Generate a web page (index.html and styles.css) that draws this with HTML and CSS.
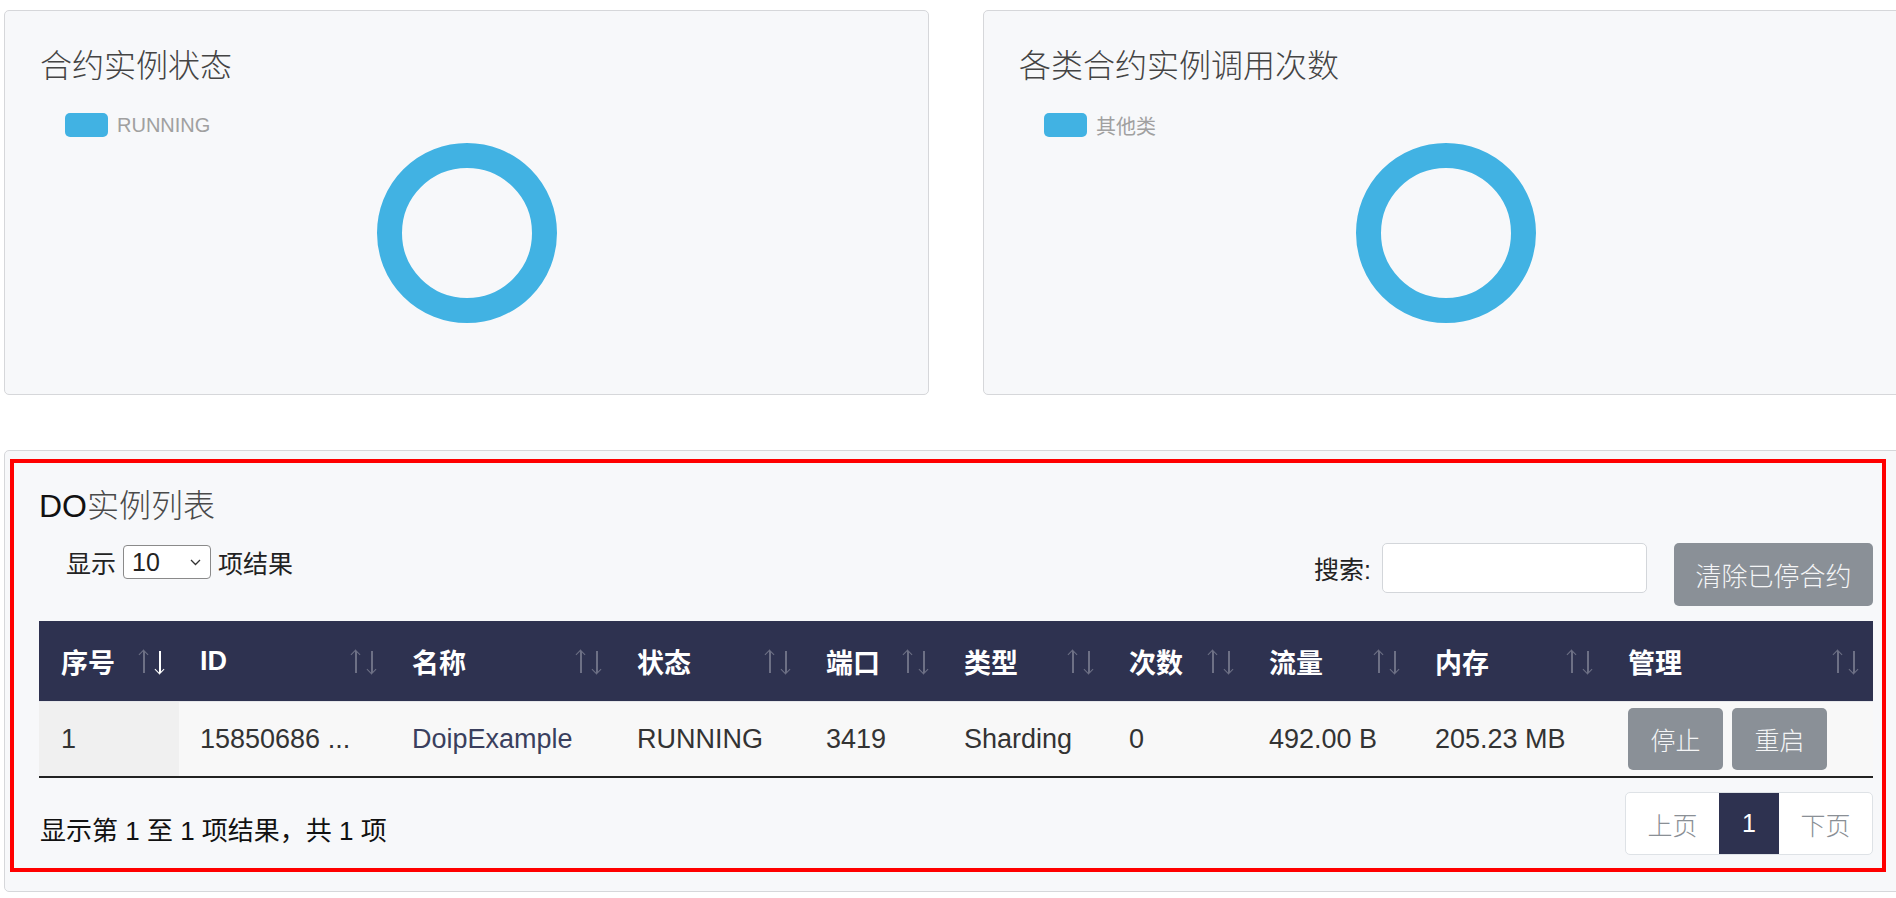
FILE: index.html
```html
<!DOCTYPE html>
<html lang="zh-CN">
<head>
<meta charset="utf-8">
<title>合约实例</title>
<link rel="stylesheet" href="styles.css">
</head>
<body>
<div class="page">
  <div class="chart-row">
    <section class="card chart-card">
      <h2 class="card-title">合约实例状态</h2>
      <div class="legend"><span class="legend-box"></span><span class="legend-label">RUNNING</span></div>
      <div class="donut-wrap">
        <svg class="donut" width="180" height="180" viewBox="0 0 180 180"><circle cx="90" cy="90" r="77.5" fill="none" stroke="#41b2e3" stroke-width="25"/></svg>
      </div>
    </section>
    <section class="card chart-card">
      <h2 class="card-title">各类合约实例调用次数</h2>
      <div class="legend"><span class="legend-box"></span><span class="legend-label">其他类</span></div>
      <div class="donut-wrap">
        <svg class="donut" width="180" height="180" viewBox="0 0 180 180"><circle cx="90" cy="90" r="77.5" fill="none" stroke="#41b2e3" stroke-width="25"/></svg>
      </div>
    </section>
  </div>

  <section class="card list-card">
    <div class="highlight">
      <h2 class="list-title"><span class="latin">DO</span><span class="cjk">实例列表</span></h2>
      <div class="controls">
        <label class="length">显示
          <span class="select-wrap">
            <select class="length-select"><option>10</option><option>25</option><option>50</option><option>100</option></select>
            <svg class="chevron" width="11" height="7" viewBox="0 0 11 7"><path d="M1 1 L5.5 5.5 L10 1" fill="none" stroke="#333" stroke-width="1.3"/></svg>
          </span>
          项结果</label>
        <div class="right-controls">
          <label class="search">搜索: <input class="search-input" type="text"></label>
          <button class="btn btn-clear">清除已停合约</button>
        </div>
      </div>
      <table class="data-table">
        <colgroup>
          <col style="width:140px"><col style="width:212px"><col style="width:225px"><col style="width:189px"><col style="width:138px">
          <col style="width:165px"><col style="width:140px"><col style="width:166px"><col style="width:193px"><col style="width:266px">
        </colgroup>
        <thead>
          <tr>
            <th class="sorted">序号<span class="sort up"></span><span class="sort down"></span></th>
            <th>ID<span class="sort up"></span><span class="sort down"></span></th>
            <th>名称<span class="sort up"></span><span class="sort down"></span></th>
            <th>状态<span class="sort up"></span><span class="sort down"></span></th>
            <th>端口<span class="sort up"></span><span class="sort down"></span></th>
            <th>类型<span class="sort up"></span><span class="sort down"></span></th>
            <th>次数<span class="sort up"></span><span class="sort down"></span></th>
            <th>流量<span class="sort up"></span><span class="sort down"></span></th>
            <th>内存<span class="sort up"></span><span class="sort down"></span></th>
            <th>管理<span class="sort up"></span><span class="sort down"></span></th>
          </tr>
        </thead>
        <tbody>
          <tr>
            <td class="sorted-col">1</td>
            <td>15850686 ...</td>
            <td class="name">DoipExample</td>
            <td>RUNNING</td>
            <td>3419</td>
            <td>Sharding</td>
            <td>0</td>
            <td>492.00 B</td>
            <td>205.23 MB</td>
            <td class="actions"><button class="btn btn-row">停止</button><button class="btn btn-row">重启</button></td>
          </tr>
        </tbody>
      </table>
      <div class="table-footer">
        <div class="info">显示第 1 至 1 项结果，共 1 项</div>
        <div class="pager">
          <span class="page-item disabled">上页</span>
          <span class="page-item active">1</span>
          <span class="page-item disabled">下页</span>
        </div>
      </div>
    </div>
  </section>
</div>
</body>
</html>
```

FILE: styles.css
```css
html, body {
  margin: 0;
  padding: 0;
  background: #ffffff;
  overflow: hidden;
}

body {
  font-family: "Liberation Sans", "Noto Sans CJK SC", sans-serif;
  color: #333333;
}

.page {
  padding: 10px 0 0 4px;
  width: 1910px;
}

.chart-row {
  display: flex;
  gap: 54px;
}

.card {
  background: #f7f8fa;
  border: 1px solid #d6d7da;
  border-radius: 5px;
  box-sizing: border-box;
  flex-shrink: 0;
}

.chart-card {
  width: 925px;
  height: 385px;
}

.card-title {
  margin: 0;
  padding: 32px 0 0 35px;
  font-family: "Noto Sans CJK SC", sans-serif;
  font-weight: 300;
  font-size: 32px;
  line-height: 40px;
  color: #444444;
}

.legend {
  display: flex;
  align-items: center;
  margin: 30px 0 0 60px;
  height: 24px;
}

.legend-box {
  width: 43px;
  height: 24px;
  border-radius: 5px;
  background: #41b2e3;
}

.legend-label {
  margin-left: 9px;
  font-size: 20px;
  color: #a0a0a0;
}

.donut-wrap {
  display: flex;
  justify-content: center;
  margin-top: 6px;
}

.donut {
  display: block;
}

.list-card {
  margin-top: 55px;
  width: 1904px;
  padding: 8px 0 19px 5px;
}

.highlight {
  width: 1876px;
  box-sizing: border-box;
  border: 4px solid #ff0000;
  padding: 20px 9px 13px 25px;
}

.list-title {
  margin: 0;
  font-weight: 400;
  font-size: 32px;
  line-height: 40px;
}

.list-title .latin {
  color: #111111;
}

.list-title .cjk {
  font-family: "Noto Sans CJK SC", sans-serif;
  font-weight: 300;
  color: #4a4a4a;
}

.controls {
  display: flex;
  justify-content: space-between;
  align-items: flex-start;
  margin-top: 17px;
  height: 63px;
}

.length {
  display: flex;
  align-items: center;
  gap: 7px;
  height: 34px;
  margin: 2px 0 0 27px;
  font-size: 25px;
  color: #222222;
}

.select-wrap {
  position: relative;
  display: block;
  width: 88px;
  height: 34px;
}

.length-select {
  appearance: none;
  -webkit-appearance: none;
  display: block;
  width: 88px;
  height: 34px;
  box-sizing: border-box;
  font-family: "Liberation Sans", sans-serif;
  font-size: 25px;
  line-height: 32px;
  color: #222222;
  background: #ffffff;
  border: 1px solid #8a8a8a;
  border-radius: 4px;
  padding: 0 0 0 8px;
}

.chevron {
  position: absolute;
  right: 10px;
  top: 14px;
  pointer-events: none;
}

.right-controls {
  display: flex;
  align-items: flex-start;
}

.search {
  display: flex;
  align-items: center;
  gap: 11px;
  height: 50px;
  font-size: 25px;
  color: #222222;
}

.search-input {
  width: 265px;
  height: 50px;
  box-sizing: border-box;
  border: 1px solid #d3d6da;
  border-radius: 5px;
  background: #ffffff;
}

.btn {
  border: none;
  border-radius: 5px;
  background: #8a9097;
  color: #f4f5f6;
  font-family: "Noto Sans CJK SC", sans-serif;
  font-weight: 300;
  padding: 0;
}

.btn-clear {
  margin-left: 27px;
  width: 199px;
  height: 63px;
  font-size: 26px;
}

.data-table {
  margin-top: 15px;
  width: 1834px;
  table-layout: fixed;
  border-collapse: collapse;
  font-size: 27px;
}

.data-table th {
  position: relative;
  height: 80px;
  padding: 0 21px;
  background: #2e3250;
  color: #ffffff;
  font-weight: 700;
  text-align: left;
}

.data-table th:first-child,
.data-table td:first-child {
  padding-left: 22px;
}

.sort {
  position: absolute;
  top: 29px;
  width: 9px;
  height: 24px;
  opacity: 0.3;
}

.sort::before {
  content: "";
  position: absolute;
  left: 4px;
  top: 1px;
  width: 1.5px;
  height: 22px;
  background: #ffffff;
}

.sort::after {
  content: "";
  position: absolute;
  left: 1px;
  width: 6px;
  height: 6px;
  border-left: 1.5px solid #ffffff;
  border-top: 1.5px solid #ffffff;
}

.sort.up {
  right: 31px;
}

.sort.up::after {
  top: 1px;
  transform: rotate(45deg);
}

.sort.down {
  right: 15px;
}

.sort.down::after {
  bottom: 1px;
  transform: rotate(225deg);
}

.sorted .sort.down {
  opacity: 1;
}

.data-table td {
  height: 62px;
  padding: 6px 21px 6px;
  background: #f8f8f8;
  color: #333333;
  border-top: 1px solid #e6e7ea;
  border-bottom: 2px solid #222222;
  white-space: nowrap;
}

.data-table td.sorted-col {
  background: #f0f0f0;
}

.data-table td.name {
  color: #3a3f5e;
}

.btn-row {
  width: 95px;
  height: 62px;
  font-size: 25px;
  vertical-align: middle;
}

.btn-row + .btn-row {
  margin-left: 9px;
}

.table-footer {
  display: flex;
  justify-content: space-between;
  align-items: flex-start;
  margin-top: 14px;
}

.info {
  margin-top: 23px;
  padding-left: 1px;
  font-size: 26px;
  line-height: 32px;
  color: #111111;
}

.pager {
  display: flex;
  height: 63px;
  border: 1px solid #dee2e6;
  border-radius: 5px;
  background: #ffffff;
  box-sizing: border-box;
  overflow: hidden;
}

.page-item {
  display: flex;
  align-items: center;
  justify-content: center;
  font-size: 25px;
  color: #8a8f95;
  font-family: "Noto Sans CJK SC", sans-serif;
  font-weight: 300;
}

.page-item.disabled {
  width: 93px;
}

.page-item.active {
  width: 60px;
  background: #2e3250;
  color: #ffffff;
  font-family: "Liberation Sans", sans-serif;
  font-weight: 400;
}
```
